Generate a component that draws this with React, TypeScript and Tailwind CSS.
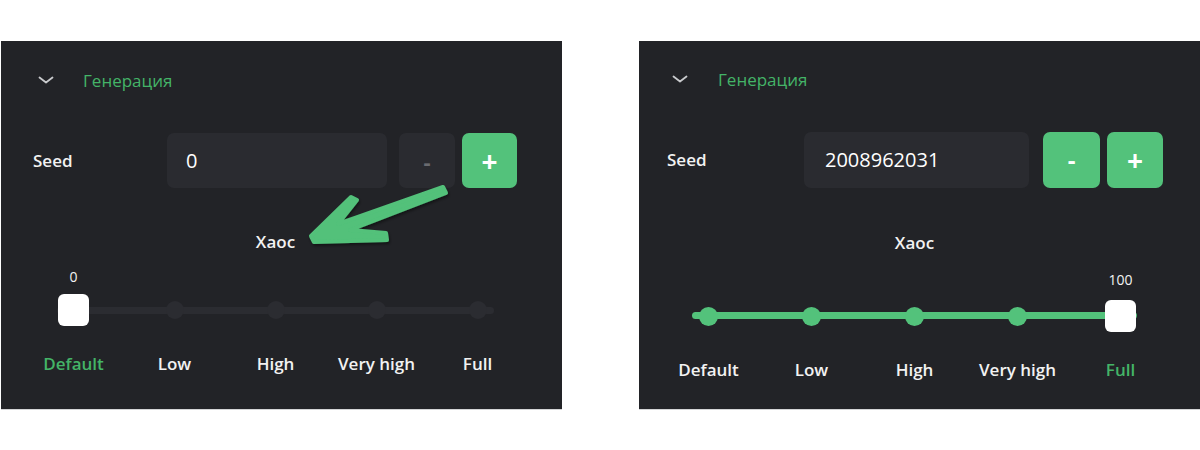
import { ReactNode } from "react";

const stops = ["Default", "Low", "High", "Very high", "Full"];

function Chevron() {
    return (
        <svg width="16" height="8" viewBox="0 0 16 8" fill="none">
            <polyline points="1.5,1.5 8,6.5 14.5,1.5" stroke="#c9cacd" strokeWidth="1.8" strokeLinecap="round" strokeLinejoin="round" />
        </svg>
    );
}

function Arrow() {
    return (
        <svg className="absolute left-[299px] top-[139px]" width="160" height="72" viewBox="0 0 160 72" fill="none">
            <defs>
                <filter id="sh" x="-10%" y="-10%" width="130%" height="140%">
                    <feDropShadow dx="1" dy="2" stdDeviation="1.5" floodColor="#000" floodOpacity="0.45" />
                </filter>
            </defs>
            <path
                d="M 11 56 L 51 17 L 57 20 L 38 44 L 143 7 L 146 13 L 50 50 L 86 53 L 87 60 L 14 62 Z"
                fill="#52c17a"
                stroke="#52c17a"
                strokeWidth="4"
                strokeLinejoin="round"
                filter="url(#sh)"
            />
        </svg>
    );
}

interface PanelProps {
    seed: string;
    value: number;
    wide?: boolean;
    children?: ReactNode;
}

function Panel({ seed, value, wide, children }: PanelProps) {
    const full = value === 100;
    const activeIndex = full ? 4 : 0;

    return (
        <div className="relative w-[561px] h-[369px] bg-[#222327] border-b border-[#d4d4d6]">
            <div className={wide ? "flex items-center h-[22px] mt-[27px] pl-[33px]" : "flex items-center h-[22px] mt-[28px] pl-[37px]"}>
                <Chevron />
                <span className={wide ? "ml-[30px] text-[17px] text-[#44b467] leading-none" : "ml-[29px] text-[17px] text-[#44b467] leading-none"}>Генерация</span>
            </div>

            <div className="flex items-center mt-[42px]">
                <span className={wide ? "w-[165px] pl-[28px] text-[17px] text-[#f2f2f2] font-semibold" : "w-[166px] pl-[32px] text-[17px] text-[#f2f2f2] font-semibold"}>Seed</span>
                <div className={wide ? "w-[225px] h-[56px] rounded-[7px] bg-[#2a2b30] flex items-center pl-[21px] text-[20px] font-medium text-white" : "w-[220px] h-[55px] rounded-[7px] bg-[#2a2b30] flex items-center pl-[19px] text-[20px] font-medium text-white"}>
                    {seed}
                </div>
                <button className={full ? "ml-[14px] w-[57px] h-[56px] rounded-[7px] bg-[#53c27b] text-white text-[24px] font-bold leading-none" : "ml-[12px] w-[56px] h-[55px] rounded-[7px] bg-[#2a2b30] text-[#6a6b70] text-[22px] font-bold leading-none"}>
                    -
                </button>
                <button className={full ? "ml-[7px] w-[56px] h-[56px] rounded-[7px] bg-[#53c27b] text-white text-[28px] font-bold leading-none" : "ml-[7px] w-[55px] h-[55px] rounded-[7px] bg-[#53c27b] text-white text-[28px] font-bold leading-none"}>
                    +
                </button>
            </div>

            <div className={wide ? "ml-[18px] w-[515px]" : "ml-[22px] w-[505px]"}>
                <div className={wide ? "mt-[42px] h-[24px] text-center text-[17px] text-[#f2f2f2] font-semibold" : "mt-[41px] h-[24px] text-center text-[17px] text-[#f2f2f2] font-semibold"}>Хаос</div>
                <div className="relative grid grid-cols-5">
                    <div className={wide ? "absolute left-[35px] right-[35px] top-[58px] h-[7px] rounded-full bg-[#53c27b]" : "absolute left-[34px] right-[34px] top-[54px] h-[7px] rounded-full bg-[#2b2c31]"} />
                    {stops.map((s, i) => (
                        <div key={s} className="relative flex flex-col items-center">
                            <div className={wide ? "mt-[17px] h-[18px] text-[14px] leading-[18px] font-medium text-[#f2f2f2]" : "mt-[15px] h-[18px] text-[14px] leading-[18px] font-medium text-[#f2f2f2]"}>
                                {i === activeIndex ? value : ""}
                            </div>
                            <div className={wide ? "mt-[11px] h-[32px] flex items-center justify-center" : "mt-[8px] h-[32px] flex items-center justify-center"}>
                                {i === activeIndex ? (
                                    <div className="w-[31px] h-[32px] rounded-[6px] bg-white" />
                                ) : (
                                    <div className={full ? "w-[19px] h-[19px] rounded-full bg-[#53c27b]" : "w-[18px] h-[18px] rounded-full bg-[#2b2c31]"} />
                                )}
                            </div>
                            <div className={i === activeIndex ? "mt-[26px] text-[17px] leading-[24px] font-semibold text-[#44b467]" : "mt-[26px] text-[17px] leading-[24px] font-semibold text-[#f2f2f2]"}>
                                {s}
                            </div>
                        </div>
                    ))}
                </div>
            </div>
            {children}
        </div>
    );
}

export default function App() {
    return (
        <div className="w-[1200px] h-[450px] bg-white pt-[41px] pl-[1px] flex gap-[77px] overflow-hidden" style={{ fontFamily: '"Open Sans", "Noto Sans", sans-serif' }}>
            <Panel seed="0" value={0}>
                <Arrow />
            </Panel>
            <Panel seed="2008962031" value={100} wide />
        </div>
    );
}
